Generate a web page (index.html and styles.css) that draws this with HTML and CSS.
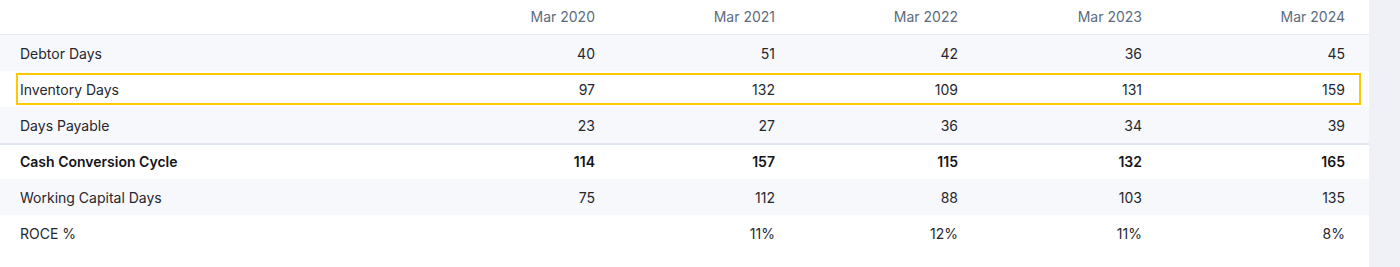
FILE: index.html
```html
<!DOCTYPE html>
<html>
<head>
<meta charset="utf-8">
<link rel="stylesheet" href="styles.css">
</head>
<body>
<div class="card">
  <div class="row head">
    <div class="label"></div>
    <div class="num">Mar 2020</div>
    <div class="num">Mar 2021</div>
    <div class="num">Mar 2022</div>
    <div class="num">Mar 2023</div>
    <div class="num">Mar 2024</div>
  </div>
  <div class="row stripe">
    <div class="label">Debtor Days</div>
    <div class="num">40</div><div class="num">51</div><div class="num">42</div><div class="num">36</div><div class="num">45</div>
  </div>
  <div class="row highlight">
    <div class="label">Inventory Days</div>
    <div class="num">97</div><div class="num">132</div><div class="num">109</div><div class="num">131</div><div class="num">159</div>
  </div>
  <div class="row stripe">
    <div class="label">Days Payable</div>
    <div class="num">23</div><div class="num">27</div><div class="num">36</div><div class="num">34</div><div class="num">39</div>
  </div>
  <div class="row strong">
    <div class="label">Cash Conversion Cycle</div>
    <div class="num">114</div><div class="num">157</div><div class="num">115</div><div class="num">132</div><div class="num">165</div>
  </div>
  <div class="row stripe">
    <div class="label">Working Capital Days</div>
    <div class="num">75</div><div class="num">112</div><div class="num">88</div><div class="num">103</div><div class="num">135</div>
  </div>
  <div class="row">
    <div class="label">ROCE %</div>
    <div class="num"></div><div class="num">11%</div><div class="num">12%</div><div class="num">11%</div><div class="num">8%</div>
  </div>
</div>
</body>
</html>
```
FILE: styles.css
```css
html, body {
  margin: 0;
  padding: 0;
  background: #eff1f6;
}
body {
  font-family: Inter, "Noto Sans", sans-serif;
  font-size: 14px;
  color: #26262e;
}
.card {
  width: 1369px;
  height: 267px;
  background: #ffffff;
}
.row {
  display: grid;
  grid-template-columns: 1fr 180px 180px 183px 184px 203px;
  align-items: center;
  height: 36px;
  padding: 0 24px 0 20px;
  box-sizing: border-box;
}
.num {
  text-align: right;
}
.head {
  height: 35px;
  padding-bottom: 1px;
  border-bottom: 1px solid #e8ecf2;
  color: #5d6b7d;
}
.stripe {
  background: #f7f8fc;
}
.highlight {
  height: 32px;
  margin: 2px 8px 2px 16px;
  border: 2px solid #fcc800;
  padding: 0 14px 0 2px;
  background: #ffffff;
}
.strong {
  border-top: 2px solid #e2e8f1;
  height: 36px;
  padding-bottom: 1px;
  font-weight: 600;
  color: #141418;
}
```
